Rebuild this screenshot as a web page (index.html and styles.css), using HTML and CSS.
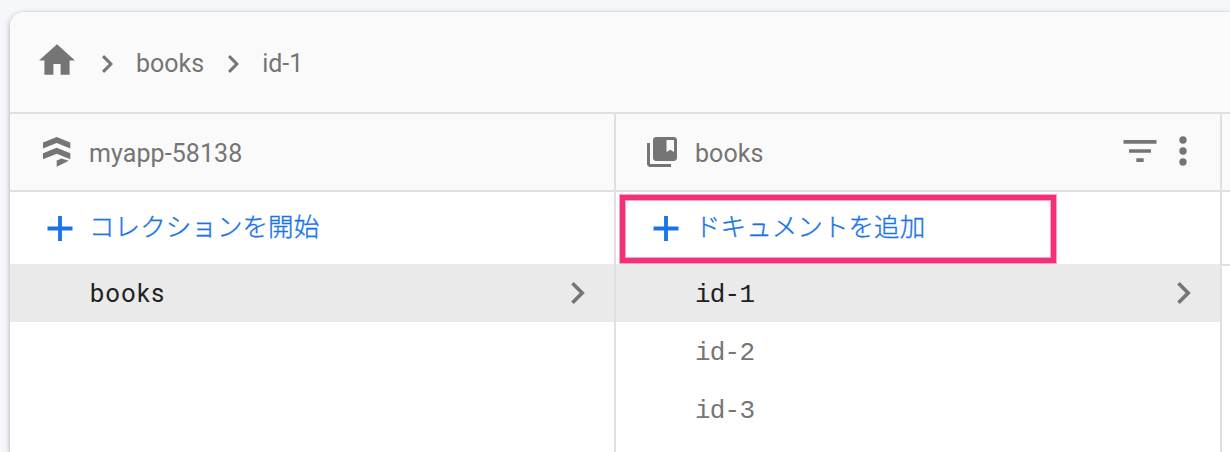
FILE: index.html
```html
<!DOCTYPE html>
<html lang="ja">
<head>
<meta charset="utf-8">
<title>Firestore</title>
<link rel="stylesheet" href="styles.css">
</head>
<body>
<main class="card">
  <nav class="crumbs">
    <svg class="home" viewBox="2 3 20 17"><path d="M10 20v-6h4v6h5v-8h3L12 3 2 12h3v8z"/></svg>
    <svg class="sep" viewBox="8.59 6 7.41 12"><path d="M10 6L8.59 7.41 13.17 12l-4.58 4.59L10 18l6-6z"/></svg>
    <span class="crumb">books</span>
    <svg class="sep" viewBox="8.59 6 7.41 12"><path d="M10 6L8.59 7.41 13.17 12l-4.58 4.59L10 18l6-6z"/></svg>
    <span class="crumb">id-1</span>
  </nav>
  <div class="panels">
    <section class="panel">
      <header class="head">
        <svg class="head-icon" viewBox="0 0 36 36"><path d="M2 8.500l13.700-5.500L29.300 8.500v6l-13.600-5.500L2 14.500zM2 19.300l13.700-5.500 13.600 5.500v6l-13.600-5.500L2 25.300zM15.700 26.600l4.800-2.100 7.300 2.300-12.100 5.900z"/></svg>
        <span class="title">myapp-58138</span>
      </header>
      <button class="add">
        <svg class="plus" viewBox="0 0 26 26"><path d="M11 0h4v11h11v4H15v11h-4V15H0v-4h11z"/></svg>
        <span class="add-label">コレクションを開始</span>
      </button>
      <div class="row selected">
        <span class="name word">books</span>
        <svg class="arrow" viewBox="8.59 6 7.41 12"><path d="M10 6L8.59 7.41 13.17 12l-4.58 4.59L10 18l6-6z"/></svg>
      </div>
    </section>
    <section class="panel">
      <header class="head head-docs">
        <svg class="head-icon" viewBox="0 0 24 24"><path d="M4 6H2v14c0 1.100.9 2 2 2h14v-2H4V6z"/><path fill-rule="evenodd" d="M20 2H8c-1.100 0-2 .9-2 2v12c0 1.100.9 2 2 2h12c1.100 0 2-.9 2-2V4c0-1.100-.9-2-2-2zm0 10l-2.500-1.500L15 12V4h5v8z"/></svg>
        <span class="title">books</span>
        <span class="tools">
          <svg class="tool" viewBox="0 0 24 24"><path d="M10 18h4v-2h-4v2zM3 6v2h18V6H3zm3 7h12v-2H6v2z"/></svg>
          <svg class="tool" viewBox="0 0 24 24"><circle cx="12" cy="6" r="2"/><circle cx="12" cy="12" r="2"/><circle cx="12" cy="18" r="2"/></svg>
        </span>
      </header>
      <button class="add">
        <svg class="plus" viewBox="0 0 26 26"><path d="M11 0h4v11h11v4H15v11h-4V15H0v-4h11z"/></svg>
        <span class="add-label">ドキュメントを追加</span>
        <span class="highlight"></span>
      </button>
      <div class="row selected">
        <span class="name">id-1</span>
        <svg class="arrow" viewBox="8.59 6 7.41 12"><path d="M10 6L8.59 7.41 13.17 12l-4.58 4.59L10 18l6-6z"/></svg>
      </div>
      <div class="row"><span class="name">id-2</span></div>
      <div class="row"><span class="name">id-3</span></div>
    </section>
    <section class="panel">
      <header class="head"></header>
      <div class="add add-empty"></div>
    </section>
  </div>
</main>
</body>
</html>
```
FILE: styles.css
```css
* { box-sizing: border-box; }
body {
  margin: 0;
  height: 452px;
  overflow: hidden;
  padding: 12px 0 0 10px;
  background: #f5f7fa;
  color: #757575;
  font: 25px/30px Roboto, "Noto Sans CJK JP", sans-serif;
}
svg { display: block; flex: none; fill: #757575; }
.card {
  height: 440px;
  background: #fff;
  border-radius: 14px 0 0 0;
  overflow: hidden;
  box-shadow: 0 2px 6px rgba(0, 0, 0, .28), 0 0 2px rgba(0, 0, 0, .12);
}
.crumbs {
  display: flex;
  align-items: center;
  height: 102px;
  padding-left: 29px;
  background: #fafafa;
  border-bottom: 2px solid #e0e0e0;
}
.home { width: 36px; height: 31px; margin: 0 27px 6px 0; }
.sep { width: 11px; height: 18px; margin: 4px 23px 0 0; }
.crumb { margin: 4px 24px 0 0; }
.panels {
  display: grid;
  grid-template-columns: 606px 606px 1fr;
  height: 338px;
}
.panel { border-right: 2px solid #e0e0e0; }
.panel:last-child { border-right: 0; }
.head {
  display: flex;
  align-items: center;
  height: 78px;
  padding-left: 31px;
  background: #fafafa;
  border-bottom: 2px solid #e0e0e0;
}
.head-docs { padding-left: 28px; }
.head-icon { width: 36px; height: 36px; margin-right: 12px; }
.head-docs .head-icon { margin-right: 15px; }
.title { margin-top: 3px; letter-spacing: .080px; }
.tools { display: flex; margin: 0 15px 3px auto; }
.tool { width: 44px; height: 44px; }
.tool:first-child { margin-right: -1px; }
.add {
  position: relative;
  display: flex;
  align-items: center;
  width: 100%;
  height: 72px;
  padding: 0 0 0 37px;
  border: 0;
  background: none;
  color: #1a73e8;
  font: inherit;
}
.plus { width: 26px; height: 25px; margin: 0 16px 0 0; fill: #1a73e8; }
.add-label {
  margin-top: -6px;
  font: 300 25.500px/36px "Noto Sans CJK JP", sans-serif;
  letter-spacing: .080px;
  -webkit-text-stroke: .35px #1a73e8;
  white-space: nowrap;
}
.add-empty { height: 74px; border-bottom: 2px solid #e0e0e0; }
.highlight {
  position: absolute;
  left: 4px;
  top: 3px;
  width: 436px;
  height: 68px;
  border: 5px solid #f2307a;
  box-shadow: 0 0 0 1px rgba(242, 48, 122, .45), inset 0 0 0 1px rgba(242, 48, 122, .45);
}
.row {
  display: flex;
  align-items: center;
  justify-content: space-between;
  height: 58px;
  padding: 0 29px 0 79px;
}
.selected { background: #eaeaea; color: #212121; }
.name {
  margin-top: 3px;
  font: 26px/30px "Liberation Mono", monospace;
  letter-spacing: -.800px;
}
.word { margin: 2px 0 0 1px; font: 25px/30px Roboto, sans-serif; letter-spacing: 1.500px; }
.arrow { width: 14px; height: 22px; margin-bottom: 1px; }
```
